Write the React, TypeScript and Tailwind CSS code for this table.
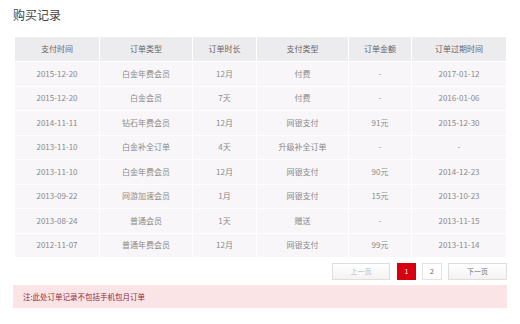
const columns = ["支付时间", "订单类型", "订单时长", "支付类型", "订单金额", "订单过期时间"];

const records = [
  ["2015-12-20", "白金年费会员", "12月", "付费", "-", "2017-01-12"],
  ["2015-12-20", "白金会员", "7天", "付费", "-", "2016-01-06"],
  ["2014-11-11", "钻石年费会员", "12月", "网银支付", "91元", "2015-12-30"],
  ["2013-11-10", "白金补全订单", "4天", "升级补全订单", "-", "-"],
  ["2013-11-10", "白金年费会员", "12月", "网银支付", "90元", "2014-12-23"],
  ["2013-09-22", "网游加速会员", "1月", "网银支付", "15元", "2013-10-23"],
  ["2013-08-24", "普通会员", "1天", "赠送", "-", "2013-11-15"],
  ["2012-11-07", "普通年费会员", "12月", "网银支付", "99元", "2013-11-14"],
];

const font = { fontFamily: '"Noto Sans CJK SC", "Noto Sans", sans-serif' };

export default function App() {
  return (
    <div className="h-[324px] w-[520px] bg-white pl-[13px] pt-[7px]" style={font}>
      <h1 className="text-[12px] leading-[16px] text-[#444]">购买记录</h1>

      <div className="mt-[14px] ml-[2px] grid w-[491px] grid-cols-[84px_92px_63px_91px_62px_94px] gap-px bg-white">
        {columns.map((c) => (
          <div
            key={c}
            className="flex h-[24px] items-center justify-center bg-[#ecebee] text-[8px] text-[#666]"
          >
            {c}
          </div>
        ))}
        {records.map((row, i) =>
          row.map((cell, j) => (
            <div
              key={`${i}-${j}`}
              className="flex h-[23.5px] items-center justify-center bg-[#f8f6f8] text-[8px] text-[#8a8a8a]"
            >
              {cell}
            </div>
          )),
        )}
      </div>

      <div className="mt-[6px] flex w-[494px] justify-end text-[7px]">
        <button className="h-[17px] w-[58px] border border-[#dedede] bg-gradient-to-b from-white to-[#f3f3f3] text-[#bbb]">
          上一页
        </button>
        <button className="ml-[7px] h-[17px] w-[19px] bg-[#d7000f] text-white">1</button>
        <button className="ml-[6px] h-[17px] w-[20px] border border-[#e3e3e3] bg-white text-[#666]">
          2
        </button>
        <button className="ml-[6px] h-[17px] w-[59px] border border-[#dedede] bg-gradient-to-b from-white to-[#f3f3f3] text-[#777]">
          下一页
        </button>
      </div>

      <div className="mt-[5px] flex h-[23px] w-[494px] items-center bg-[#fbe4e6] pl-[10px] text-[7.5px] text-[#8f2b3c]">
        注:此处订单记录不包括手机包月订单
      </div>
    </div>
  );
}
